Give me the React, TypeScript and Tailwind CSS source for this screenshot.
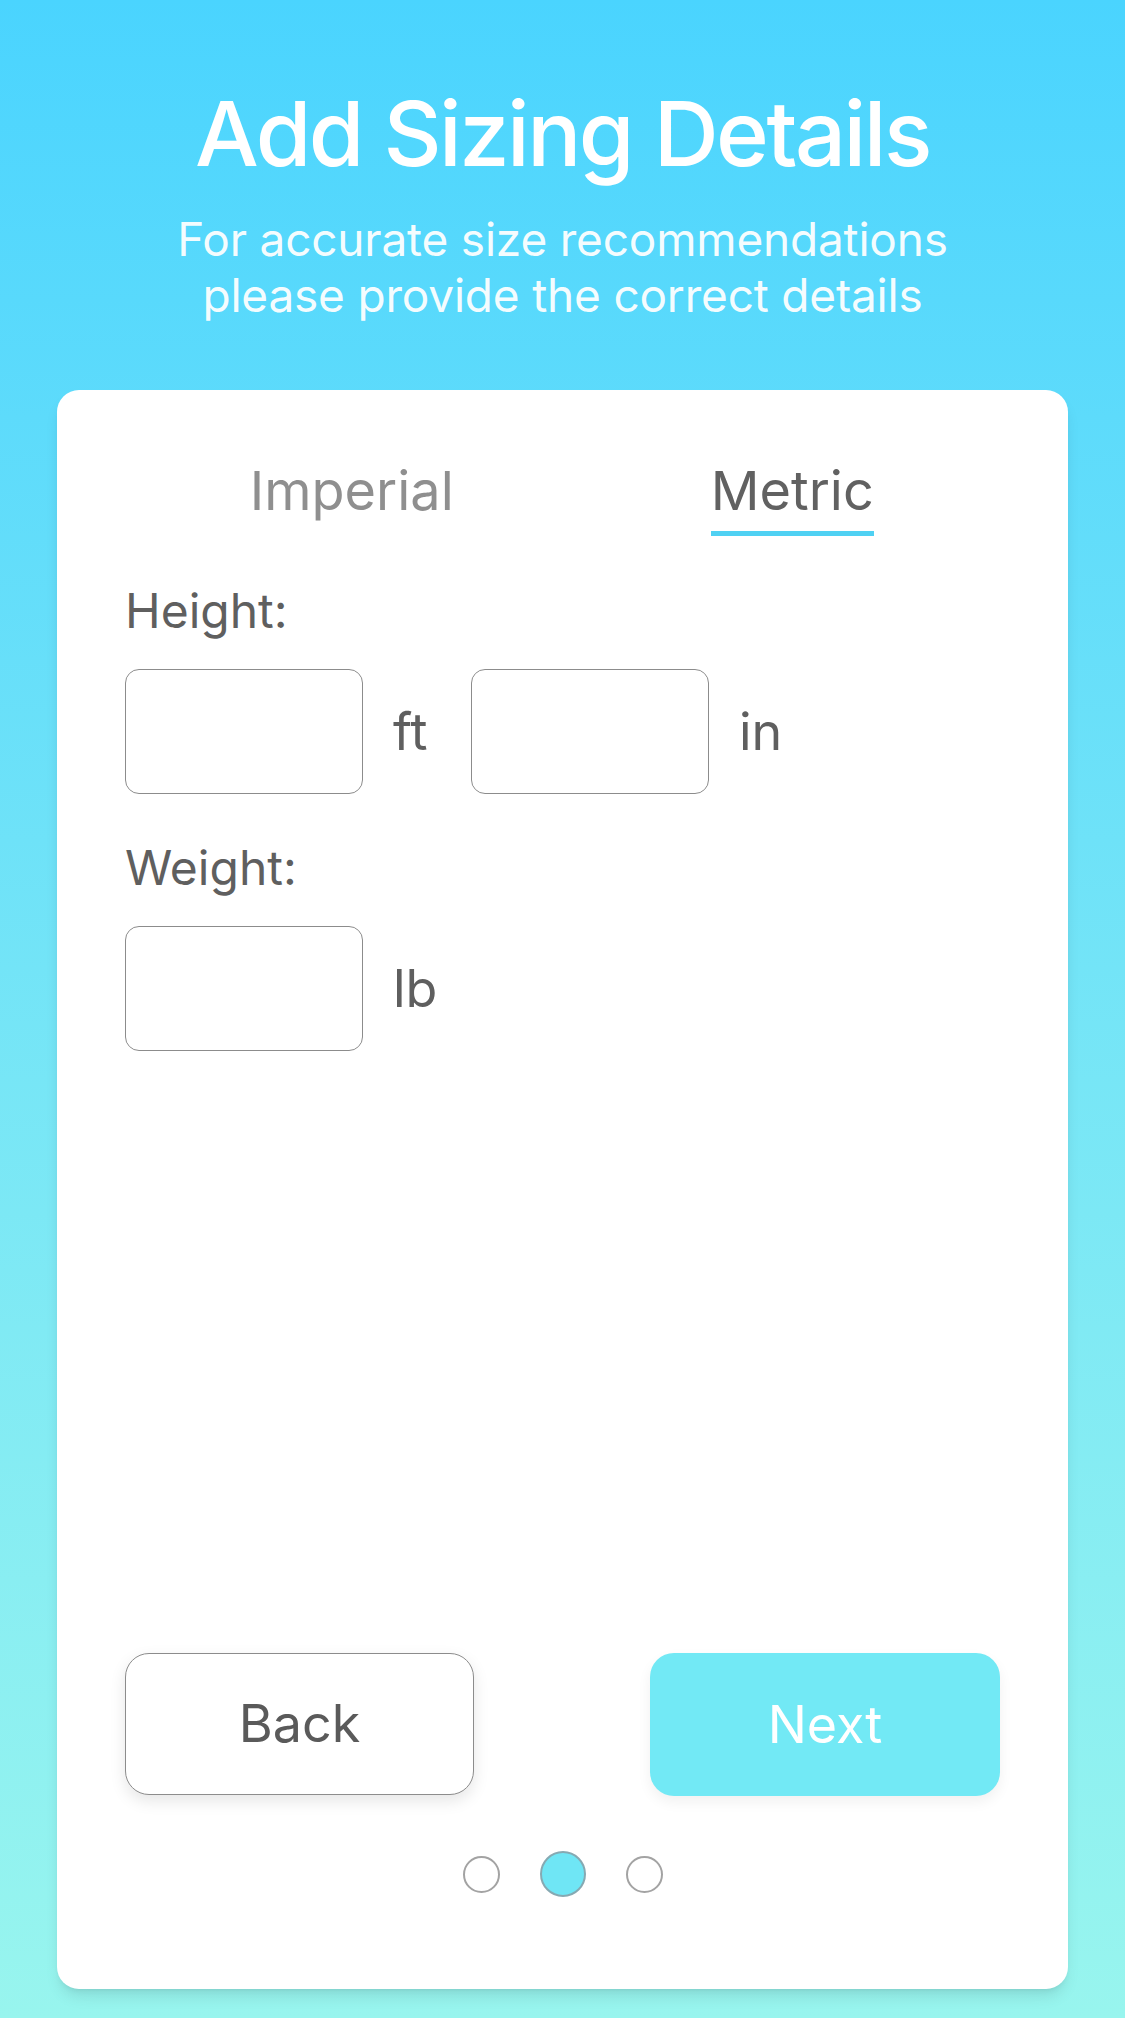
import React from "react";

const UnitInput: React.FC<{ unit: string }> = ({ unit }) => {
  return (
    <div className="flex items-center">
      <div className="w-[238px] h-[125px] rounded-[14px] border border-[#8c8c8c] bg-white"></div>
      <span className="w-[108px] pl-[30px] text-[52px] leading-none text-[#5f5f5f]">{unit}</span>
    </div>
  );
};

export default function App() {
  return (
    <div className="min-h-[2018px] w-full flex flex-col items-center bg-gradient-to-b from-[#4ad4fe] to-[#98f5ee] font-['Inter',_sans-serif]">
      <h1 className="pt-[89px] text-[90px] leading-none font-medium tracking-[-2.5px] text-white">Add Sizing Details</h1>
      <p className="mt-[32px] text-[46px] leading-[56px] tracking-[-0.2px] text-center text-white/95">
        For accurate size recommendations
        <br />
        please provide the correct details
      </p>

      <div className="mt-[67px] w-[1011px] h-[1599px] rounded-[22px] bg-white shadow-lg flex flex-col px-[68px] pt-[74px] pb-[92px]">
        <div className="grid grid-cols-2">
          <div className="flex justify-center">
            <span className="text-[54px] leading-none text-[#8f8f8f] pl-[16px]">Imperial</span>
          </div>
          <div className="flex justify-center">
            <div className="flex flex-col pl-[22px]">
              <span className="text-[54px] leading-none text-[#616161]">Metric</span>
              <div className="mt-[13px] h-[5px] bg-[#4fd1f3]"></div>
            </div>
          </div>
        </div>

        <label className="mt-[51px] text-[48px] leading-none text-[#5f5f5f]">Height:</label>
        <div className="mt-[34px] flex">
          <UnitInput unit="ft" />
          <UnitInput unit="in" />
        </div>

        <label className="mt-[50px] text-[48px] leading-none text-[#5f5f5f]">Weight:</label>
        <div className="mt-[34px] flex">
          <UnitInput unit="lb" />
        </div>

        <div className="mt-auto flex justify-between">
          <button className="w-[349px] h-[142px] rounded-[24px] border border-[#8c8c8c] bg-white text-[52px] text-[#5a5a5a] shadow-[0_6px_16px_rgba(0,0,0,0.1)]">
            Back
          </button>
          <button className="w-[350px] h-[143px] rounded-[24px] bg-[#72e9f5] text-[52px] text-white shadow-[0_6px_14px_rgba(0,0,0,0.06)]">
            Next
          </button>
        </div>

        <div className="mt-[55px] flex items-center justify-center gap-[40px]">
          <div className="w-[37px] h-[37px] rounded-full border-2 border-[#a3a3a3] bg-white"></div>
          <div className="w-[46px] h-[46px] rounded-full border-2 border-[#86a9b2] bg-[#6fe6f5]"></div>
          <div className="w-[37px] h-[37px] rounded-full border-2 border-[#a3a3a3] bg-white"></div>
        </div>
      </div>
    </div>
  );
}
